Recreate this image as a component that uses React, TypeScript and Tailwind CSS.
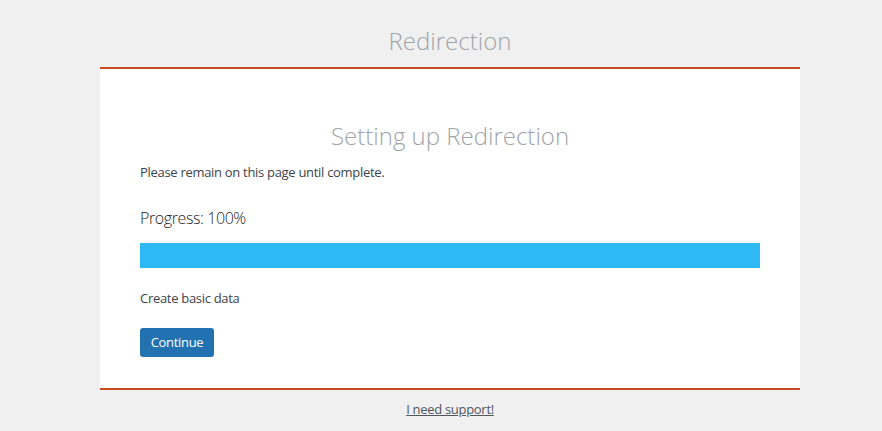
import React from 'react';

const App: React.FC = () => {
  return (
    <div
      className="min-h-screen bg-[#f0f0f1] pt-[25px] text-[13px] tracking-[-0.3px] text-[#3c434a]"
      style={{ fontFamily: '"Open Sans", "Noto Sans", sans-serif' }}
    >
      <div className="ml-[100px] w-[700px]">
        {/* Header */}
        <h1 className="text-center text-[24px] font-light leading-[32px] tracking-normal text-[#a0a5aa]">
          Redirection
        </h1>

        {/* Setup card */}
        <div className="mt-[10px] border-y-2 border-[#ca4a1f] bg-white px-[40px] pt-[51px] pb-[31px]">
          <h2 className="text-center text-[24px] font-light leading-[32px] tracking-normal text-[#a0a5aa]">
            Setting up Redirection
          </h2>
          <p className="mt-[10px] leading-[20px]">Please remain on this page until complete.</p>

          <p className="mt-[24px] text-[16px] font-light leading-[24px] tracking-[-0.4px] text-[#1d2327]">
            Progress: 100%
          </p>
          <div className="mt-[13px] h-[25px] w-full bg-[#2eb8f4]" />

          <p className="mt-[20px] leading-[20px]">Create basic data</p>

          <button
            type="button"
            className="mt-[20px] h-[29px] w-[74px] rounded-[3px] bg-[#2271b1] text-[13px] text-white"
          >
            Continue
          </button>
        </div>

        {/* Footer */}
        <div className="mt-[9px] text-center leading-[20px]">
          <a href="#" className="text-[#50575e] underline">
            I need support!
          </a>
        </div>
      </div>
    </div>
  );
};

export default App;
